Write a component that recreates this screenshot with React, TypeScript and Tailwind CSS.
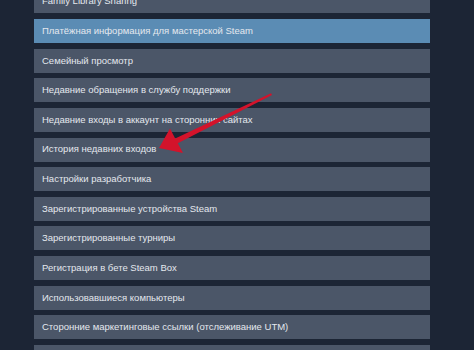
import React from "react";

const items = [
  "Family Library Sharing",
  "Платёжная информация для мастерской Steam",
  "Семейный просмотр",
  "Недавние обращения в службу поддержки",
  "Недавние входы в аккаунт на сторонних сайтах",
  "История недавних входов",
  "Настройки разработчика",
  "Зарегистрированные устройства Steam",
  "Зарегистрированные турниры",
  "Регистрация в бете Steam Box",
  "Использовавшиеся компьютеры",
  "Сторонние маркетинговые ссылки (отслеживание UTM)",
  "Настройки конфиденциальности",
];

export default function App() {
  return (
    <div
      className="relative w-[474px] h-[350px] overflow-hidden bg-[#1c2535]"
      style={{ fontFamily: '"Liberation Sans", Arial, sans-serif' }}
    >
      <div className="flex flex-col gap-[5.64px] ml-[34px] w-[396px] -mt-[10.64px]">
        {items.map((t, i) => (
          <div
            key={i}
            className={
              "h-[24px] shrink-0 flex items-center pl-[8px] text-[9.5px] text-[#e4e8ee] " +
              (i === 1 ? "bg-[#5b8cb4]" : "bg-[#4b5668]")
            }
          >
            {t}
          </div>
        ))}
      </div>
      <svg
        className="absolute left-0 top-0 pointer-events-none"
        width="474"
        height="350"
        viewBox="0 0 474 350"
      >
        <polygon
          points="271,93.3 272,95 177.8,143.2 183,153 159,148 170,128.5 175.2,138.6"
          fill="#d3132b"
        />
      </svg>
    </div>
  );
}
